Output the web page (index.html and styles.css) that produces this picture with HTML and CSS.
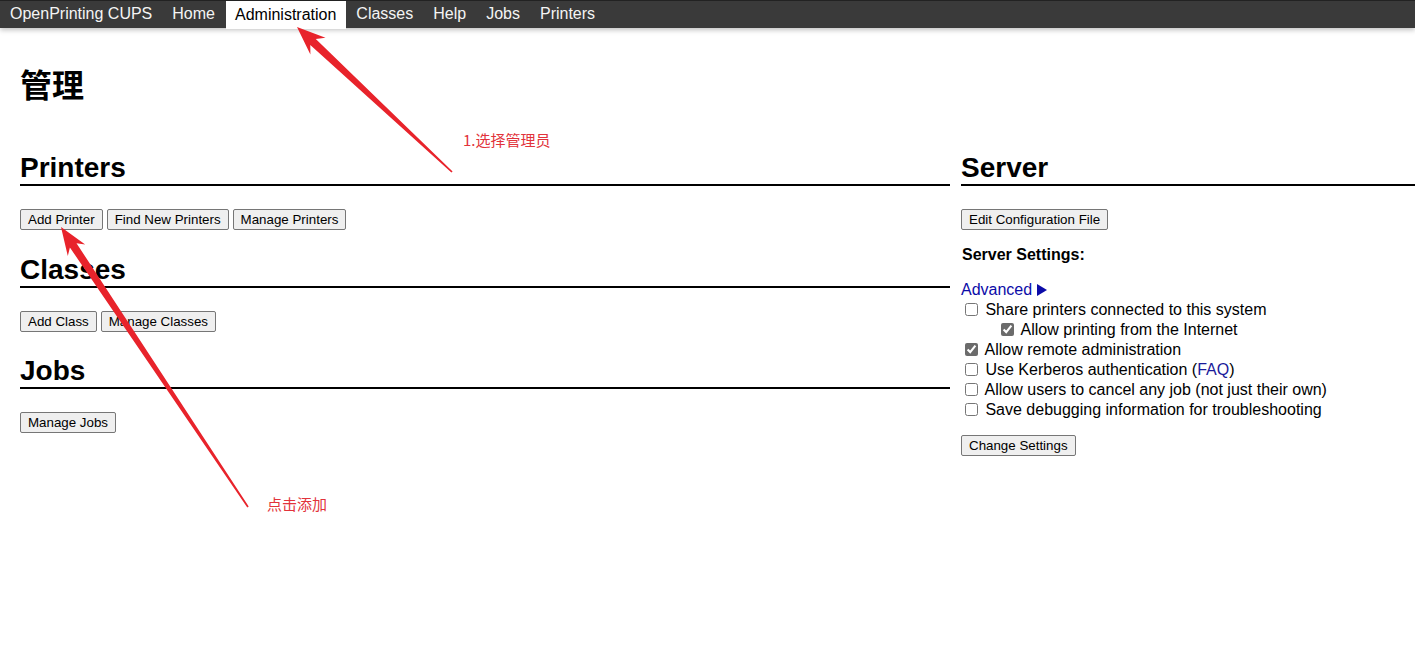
FILE: index.html
```html
<!DOCTYPE html>
<html lang="zh">
<head>
<meta charset="utf-8">
<title>管理 - CUPS</title>
<link rel="stylesheet" href="styles.css">
</head>
<body>
<nav class="topbar">
  <a class="nav-item" href="#">OpenPrinting CUPS</a>
  <a class="nav-item" href="#">Home</a>
  <a class="nav-item active" href="#">Administration</a>
  <a class="nav-item" href="#">Classes</a>
  <a class="nav-item" href="#">Help</a>
  <a class="nav-item" href="#">Jobs</a>
  <a class="nav-item" href="#">Printers</a>
</nav>
<main class="page">
  <h1 class="title">管理</h1>
  <div class="columns">
    <div class="col-left">
      <section class="section">
        <h2 class="sec-head">Printers</h2>
        <div class="btn-row">
          <button class="btn">Add Printer</button>
          <button class="btn">Find New Printers</button>
          <button class="btn">Manage Printers</button>
        </div>
      </section>
      <section class="section">
        <h2 class="sec-head">Classes</h2>
        <div class="btn-row">
          <button class="btn">Add Class</button>
          <button class="btn">Manage Classes</button>
        </div>
      </section>
      <section class="section">
        <h2 class="sec-head">Jobs</h2>
        <div class="btn-row">
          <button class="btn">Manage Jobs</button>
        </div>
      </section>
    </div>
    <div class="col-right">
      <h2 class="sec-head">Server</h2>
      <div class="btn-row">
        <button class="btn">Edit Configuration File</button>
      </div>
      <p class="settings-title">Server Settings:</p>
      <a class="advanced" href="#">Advanced <svg class="tri" width="10" height="12" viewBox="0 0 10 12"><polygon points="0,0 10,6 0,12" fill="#0b0ba8"/></svg></a>
      <div class="checks">
        <label class="check"><input type="checkbox"> Share printers connected to this system</label>
        <label class="check sub"><input type="checkbox" checked> Allow printing from the Internet</label>
        <label class="check"><input type="checkbox" checked> Allow remote administration</label>
        <label class="check"><input type="checkbox"> Use Kerberos authentication (<a class="link" href="#">FAQ</a>)</label>
        <label class="check"><input type="checkbox"> Allow users to cancel any job (not just their own)</label>
        <label class="check"><input type="checkbox"> Save debugging information for troubleshooting</label>
      </div>
      <div class="btn-row change">
        <button class="btn">Change Settings</button>
      </div>
    </div>
  </div>
</main>
<div class="overlay">
  <svg class="arrows" width="1415" height="647" viewBox="0 0 1415 647">
    <polygon fill="#e8232b" points="297,27 325.5,37.8 315.8,39.0 452.6,171.4 451.4,172.6 310.3,44.9 310.4,54.6"/>
    <polygon fill="#e8232b" points="61,227 85.2,244.6 76.5,243.2 248.7,506.6 247.3,507.4 69.9,247.5 67.8,256.0"/>
  </svg>
  <span class="note note-1">1.选择管理员</span>
  <span class="note note-2">点击添加</span>
</div>
</body>
</html>
```
FILE: styles.css
```css
html, body {
  margin: 0;
  padding: 0;
  background: #fff;
}
body {
  font-family: "Liberation Sans", Arial, "Noto Sans CJK SC", sans-serif;
  color: #000;
  position: relative;
  width: 1415px;
  height: 647px;
  overflow: hidden;
}
.topbar {
  display: flex;
  height: 28px;
  background: #3a3a3a;
  border-top: 1px solid #222;
  box-sizing: border-box;
  box-shadow: 0 2px 5px rgba(0,0,0,0.25);
  position: relative;
  z-index: 1;
}
.nav-item {
  display: block;
  padding: 0 10px;
  line-height: 26px;
  font-size: 16px;
  color: #f4f4f4;
  text-decoration: none;
}
.nav-item.active {
  background: #fff;
  color: #000;
  margin-left: 1px;
  padding: 0 10px 0 9px;
  line-height: 27px;
  height: 28px;
}
.page {
  padding: 0 0 0 20px;
}
.title {
  margin: 38px 0 0 0;
  font-family: "Liberation Sans", "Noto Sans CJK SC", sans-serif;
  font-size: 32px;
  line-height: 40px;
  font-weight: bold;
}
.columns {
  display: flex;
  gap: 11px;
  margin-top: 46px;
}
.col-left {
  width: 930px;
  flex: none;
}
.col-right {
  width: 454px;
  flex: none;
}
.section {
  margin-bottom: 23.5px;
}
.sec-head {
  margin: 0;
  font-size: 28px;
  line-height: 32px;
  font-weight: bold;
  border-bottom: 2px solid #000;
}
.btn-row {
  display: flex;
  gap: 4px;
  margin-top: 23px;
}
.btn {
  font-family: "Liberation Sans", Arial, sans-serif;
  font-size: 13.333px;
  line-height: 15px;
  height: 21px;
  padding: 1px 7px;
  background: #efefef;
  border: 1px solid #767676;
  border-radius: 2px;
  color: #000;
}
.settings-title {
  margin: 15px 0 0 1px;
  font-size: 16px;
  line-height: 20px;
  font-weight: bold;
}
.advanced {
  display: block;
  margin-top: 15px;
  font-size: 16px;
  line-height: 20px;
  color: #0b0ba8;
  text-decoration: none;
}
.tri {
  vertical-align: -1px;
}
.checks {
  display: flex;
  flex-direction: column;
}
.check {
  display: block;
  font-size: 16px;
  line-height: 20px;
  height: 20px;
}
.check input {
  width: 13px;
  height: 13px;
  margin: 3px 3px 3px 4px;
  vertical-align: -1px;
  accent-color: #6b6b6b;
}
.check.sub {
  padding-left: 36px;
}
.link {
  color: #1a1a9a;
  text-decoration: none;
}
.btn-row.change {
  margin-top: 15px;
}
.overlay {
  position: absolute;
  left: 0;
  top: 0;
  width: 1415px;
  height: 647px;
  pointer-events: none;
  z-index: 2;
}
.arrows {
  position: absolute;
  left: 0;
  top: 0;
}
.note {
  position: absolute;
  font-family: "Noto Sans CJK SC", sans-serif;
  font-size: 15px;
  line-height: 18px;
  color: #e2333b;
}
.note-1 {
  left: 463px;
  top: 131px;
}
.note-2 {
  left: 267px;
  top: 495px;
}
```
